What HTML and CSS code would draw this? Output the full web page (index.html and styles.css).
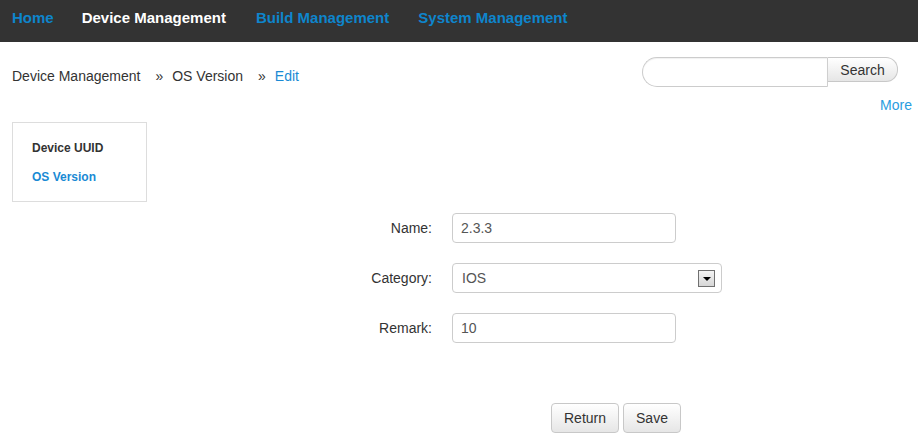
FILE: index.html
```html
<!DOCTYPE html>
<html>
<head>
<meta charset="utf-8">
<link rel="stylesheet" href="styles.css">
</head>
<body>
<nav class="topnav">
  <a class="nav-link">Home</a>
  <a class="nav-link active">Device Management</a>
  <a class="nav-link build">Build Management</a>
  <a class="nav-link system">System Management</a>
</nav>
<div class="crumbbar">
  <div class="breadcrumb">
    <span class="crumb">Device Management</span>
    <span class="divider">»</span>
    <span class="crumb">OS Version</span>
    <span class="divider">»</span>
    <a class="crumb current">Edit</a>
  </div>
  <div class="search">
    <input class="search-input" type="text">
    <button class="search-btn">Search</button>
  </div>
</div>
<div class="more-row"><a class="more">More</a></div>
<div class="main">
  <aside class="sidebar">
    <div class="side-item">Device UUID</div>
    <div class="side-item selected">OS Version</div>
  </aside>
  <form class="edit-form">
    <div class="fields">
      <label class="label">Name:</label>
      <div class="control"><div class="input short">2.3.3</div></div>
      <label class="label">Category:</label>
      <div class="control">
        <div class="select">
          <span>IOS</span>
          <span class="arrow-box"><span class="arrow"></span></span>
        </div>
      </div>
      <label class="label">Remark:</label>
      <div class="control"><div class="input short">10</div></div>
    </div>
    <div class="actions">
      <button type="button" class="btn">Return</button>
      <button type="button" class="btn">Save</button>
    </div>
  </form>
</div>
</body>
</html>
```

FILE: styles.css
```css
* { box-sizing: border-box; }
body {
  margin: 0;
  font-family: "Liberation Sans", Arial, sans-serif;
  font-size: 14px;
  color: #333;
  background: #fff;
}
.topnav {
  height: 42px;
  background: #333333;
  display: flex;
  align-items: flex-start;
  padding: 9px 0 0 12px;
}
.nav-link {
  font-size: 15px;
  font-weight: bold;
  line-height: 18px;
  color: #0e85cc;
  text-decoration: none;
  margin-right: 28px;
}
.nav-link.active { color: #ffffff; margin-right: 30px; }
.nav-link.build { margin-right: 29px; }

.crumbbar {
  display: flex;
  justify-content: space-between;
  align-items: flex-start;
  padding: 15px 20px 0 12px;
}
.breadcrumb {
  display: flex;
  padding-top: 9px;
  line-height: 20px;
}
.crumb { color: #333; }
.crumb.current { color: #1a8ad4; }
.divider {
  margin: 0 9px 0 15px;
  color: #333;
}
.search { display: flex; align-items: flex-start; }
.search-input {
  width: 186px;
  height: 30px;
  border: 1px solid #cccccc;
  border-right: 1px solid #cfcfcf;
  border-radius: 15px 0 0 15px;
  margin: 0;
  padding: 0 10px;
  font: inherit;
  outline: none;
  box-shadow: inset 0 1px 1px rgba(0,0,0,0.06);
}
.search-btn {
  width: 70px;
  height: 25px;
  margin: 0;
  border: 1px solid #c8c8c8;
  border-left: none;
  border-radius: 0 12px 12px 0;
  background: linear-gradient(#ffffff, #e6e6e6);
  font: inherit;
  color: #333;
  padding: 1px 0 0 0;
}
.more-row {
  text-align: right;
  padding: 10px 6px 0 0;
  line-height: 16px;
}
.more { color: #2a9de0; text-decoration: none; }

.main {
  display: flex;
  align-items: flex-start;
  padding: 9px 0 0 12px;
}
.sidebar {
  width: 135px;
  height: 80px;
  border: 1px solid #dddddd;
  padding: 11px 0 0 19px;
}
.side-item {
  font-size: 12px;
  font-weight: bold;
  line-height: 29px;
  color: #333;
}
.side-item.selected { color: #1a8ad4; }

.edit-form {
  margin: 91px 0 0 165px;
}
.fields {
  display: grid;
  grid-template-columns: 120px auto;
  column-gap: 20px;
  row-gap: 20px;
  align-items: center;
}
.label {
  text-align: right;
  color: #333;
  line-height: 16px;
}
.control { display: flex; }
.input {
  height: 30px;
  border: 1px solid #cccccc;
  border-radius: 4px;
  padding: 0 8px;
  line-height: 28px;
  color: #555;
}
.input.short { width: 224px; }
.select {
  width: 270px;
  height: 30px;
  border: 1px solid #cccccc;
  border-radius: 4px;
  padding: 0 6px 0 9px;
  display: flex;
  justify-content: space-between;
  align-items: center;
  color: #555;
  line-height: 16px;
}
.arrow-box {
  width: 17px;
  height: 17px;
  border: 1px solid #707070;
  background: linear-gradient(#f4f4f4, #d6d6d6);
  display: flex;
  align-items: center;
  justify-content: center;
}
.arrow {
  width: 0;
  height: 0;
  border-left: 4px solid transparent;
  border-right: 4px solid transparent;
  border-top: 4px solid #000;
  margin-top: 1px;
}
.actions {
  display: flex;
  gap: 4px;
  margin: 60px 0 0 239px;
}
.btn {
  height: 30px;
  padding: 0 12px;
  border: 1px solid #c8c8c8;
  border-radius: 4px;
  background: linear-gradient(#ffffff, #e6e6e6);
  font: inherit;
  color: #333;
}
```
